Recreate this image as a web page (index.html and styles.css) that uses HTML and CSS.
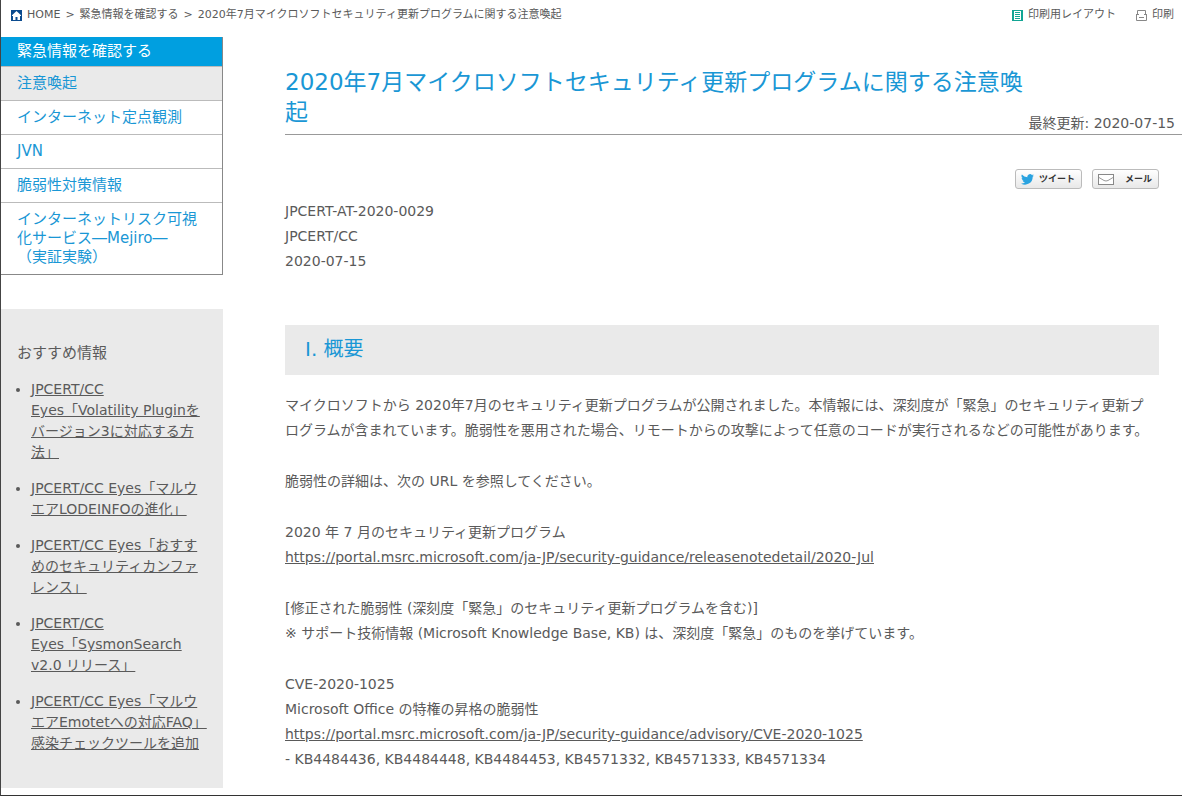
FILE: index.html
```html
<!DOCTYPE html>
<html lang="ja">
<head>
<meta charset="utf-8">
<title>2020年7月マイクロソフトセキュリティ更新プログラムに関する注意喚起</title>
<link rel="stylesheet" href="styles.css">
</head>
<body>
<div class="page">
  <header class="topbar">
    <nav class="breadcrumb" aria-label="パンくず">
      <svg class="icon-home" viewBox="0 0 11 11" aria-hidden="true"><rect width="11" height="11" fill="#0b4b8f"/><path d="M5.5 1 10 5.2V6H9v4H6.500V7h-2v3H2V6H1v-.8z" fill="#fff"/></svg>
      <a href="#">HOME</a><span>&gt;</span><a href="#">緊急情報を確認する</a><span>&gt;</span><span>2020年7月マイクロソフトセキュリティ更新プログラムに関する注意喚起</span>
    </nav>
    <div class="tools">
      <a href="#"><svg class="icon-tool" viewBox="0 0 11 11" aria-hidden="true"><rect width="11" height="11" fill="#12a594"/><path d="M2 1h7v9H2z" fill="#fff"/><path d="M3 2.500h5M3 4.500h5M3 6.500h5M3 8.500h5" stroke="#12a594"/></svg>印刷用レイアウト</a>
      <a href="#"><svg class="icon-tool" viewBox="0 0 11 11" aria-hidden="true"><path d="M1.500 4V.500h8V4M.500 4.500v6h10v-6M0 4.500h3M8 4.500h3M3 7.500h5" fill="none" stroke="#888"/></svg>印刷</a>
    </div>
  </header>
  <div class="columns">
    <aside class="side">
      <nav class="menu">
        <h2>緊急情報を確認する</h2>
        <ul>
          <li class="current"><a href="#">注意喚起</a></li>
          <li><a href="#">インターネット定点観測</a></li>
          <li><a href="#">JVN</a></li>
          <li><a href="#">脆弱性対策情報</a></li>
          <li><a href="#">インターネットリスク可視化サービス―Mejiro―<br>（実証実験）</a></li>
        </ul>
      </nav>
      <section class="recommend">
        <h2>おすすめ情報</h2>
        <ul>
          <li><a href="#">JPCERT/CC<br>Eyes「Volatility Pluginを<br>バージョン3に対応する方<br>法」</a></li>
          <li><a href="#">JPCERT/CC Eyes「マルウ<br>エアLODEINFOの進化」</a></li>
          <li><a href="#">JPCERT/CC Eyes「おすす<br>めのセキュリティカンファ<br>レンス」</a></li>
          <li><a href="#">JPCERT/CC<br>Eyes「SysmonSearch<br>v2.0 リリース」</a></li>
          <li><a href="#">JPCERT/CC Eyes「マルウ<br>エアEmotetへの対応FAQ」<br>感染チェックツールを追加</a></li>
        </ul>
      </section>
    </aside>
    <main class="main">
      <div class="title">
        <h1>2020年7月マイクロソフトセキュリティ更新プログラムに関する注意喚起</h1>
        <p class="updated">最終更新: 2020-07-15</p>
      </div>
      <div class="body">
        <div class="share">
          <button type="button"><svg class="icon-bird" viewBox="0 0 24 20" aria-hidden="true"><path d="M24 2.400a10 10 0 0 1-2.800.8A5 5 0 0 0 23.300.400a10 10 0 0 1-3.100 1.200A4.900 4.900 0 0 0 11.800 6 14 14 0 0 1 1.700.900a4.900 4.900 0 0 0 1.500 6.600A5 5 0 0 1 1 6.900a4.900 4.900 0 0 0 3.900 4.800 5 5 0 0 1-2.200.1 4.900 4.900 0 0 0 4.600 3.400A9.900 9.900 0 0 1 0 17.300a14 14 0 0 0 21.500-12.400A10 10 0 0 0 24 2.400z" fill="#2aa3e0"/></svg>ツイート</button>
          <button type="button"><svg class="icon-mail" viewBox="0 0 16 11" aria-hidden="true"><rect x=".5" y=".5" width="15" height="10" fill="#fff" stroke="#888"/><path d="M1 3.500l5 3q2 1 4 0l5-3" fill="none" stroke="#999"/></svg>メール</button>
        </div>
        <p class="meta">JPCERT-AT-2020-0029<br>JPCERT/CC<br>2020-07-15</p>
        <h2 class="section">I. 概要</h2>
        <p>マイクロソフトから 2020年7月のセキュリティ更新プログラムが公開されました。本情報には、深刻度が「緊急」のセキュリティ更新プ<br>ログラムが含まれています。脆弱性を悪用された場合、リモートからの攻撃によって任意のコードが実行されるなどの可能性があります。</p>
        <p>脆弱性の詳細は、次の URL を参照してください。</p>
        <p>2020 年 7 月のセキュリティ更新プログラム<br><a href="#">https://portal.msrc.microsoft.com/ja-JP/security-guidance/releasenotedetail/2020-Jul</a></p>
        <p>[修正された脆弱性 (深刻度「緊急」のセキュリティ更新プログラムを含む)]<br>※ サポート技術情報 (Microsoft Knowledge Base, KB) は、深刻度「緊急」のものを挙げています。</p>
        <p>CVE-2020-1025<br>Microsoft Office の特権の昇格の脆弱性<br><a href="#">https://portal.msrc.microsoft.com/ja-JP/security-guidance/advisory/CVE-2020-1025</a><br>- KB4484436, KB4484448, KB4484453, KB4571332, KB4571333, KB4571334</p>
      </div>
    </main>
  </div>
</div>
</body>
</html>
```

FILE: styles.css
```css
* { box-sizing: border-box; }
body {
  margin: 0;
  background: #fff;
  color: #5a5a5a;
  font: 14px/25px "DejaVu Sans", "Noto Sans CJK JP", sans-serif;
}
h1, h2, p, ul { margin: 0; padding: 0; font-weight: 400; }
ul { list-style: none; }
a { color: inherit; }

.page {
  min-height: 100vh;
  border-left: 1px solid #444;
  border-bottom: 1px solid #333;
}
.topbar {
  display: flex;
  justify-content: space-between;
  height: 37px;
  padding: 6px 8px 0 10px;
  font-size: 11px;
  line-height: 18px;
}
.topbar a { text-decoration: none; }
.breadcrumb { display: flex; gap: 5px; }
.icon-home, .icon-tool { width: 11px; height: 11px; margin-top: 4px; }
.tools { display: flex; gap: 20px; }
.tools a { display: flex; gap: 5px; }

.columns { display: flex; gap: 62px; }
.side { flex: 0 0 222px; }
.menu {
  border: solid #888;
  border-width: 0 1px 1px 0;
  font-size: 15px;
  line-height: 19px;
  color: #1a97d5;
}
.menu h2 {
  padding: 5px 16px;
  background: #009fe0;
  color: #fff;
  font-size: 15px;
  line-height: 19px;
}
.menu li { border-top: 1px solid #bbb; padding: 7px 16px; }
.menu a { text-decoration: none; }
.menu .current { background: #eaeaea; }

.recommend {
  margin-top: 34px;
  padding: 32px 16px 34px;
  background: #eaeaea;
  line-height: 21px;
}
.recommend h2 { margin-bottom: 13px; font-size: 15px; line-height: 25px; }
.recommend ul { padding-left: 14px; list-style: disc; white-space: nowrap; }
.recommend li { margin-bottom: 15px; }
.recommend li:last-child { margin-bottom: 0; }

.main { flex: 1; min-width: 0; }
.title {
  display: flex;
  flex-wrap: wrap;
  align-items: flex-end;
  justify-content: space-between;
  padding: 30px 7px 0 0;
  border-bottom: 1px solid #999;
}
.title h1 {
  flex: 0 1 741px;
  padding-bottom: 7px;
  color: #1a97d5;
  font-size: 23px;
  line-height: 30px;
}
.updated { white-space: nowrap; line-height: 22px; }
.body { padding: 34px 23px 22px 0; }
.body p { margin-bottom: 26px; }
.body p:last-child { margin-bottom: 0; }
.share { display: flex; justify-content: flex-end; gap: 10px; margin-bottom: 10px; }
.share button {
  display: flex;
  align-items: center;
  justify-content: space-between;
  width: 67px;
  height: 20px;
  padding: 0 6px 0 5px;
  border: 1px solid #bbb;
  border-radius: 3px;
  background: linear-gradient(#fff, #e8e8e8);
  color: #333;
  font: 700 9px/18px "Noto Sans CJK JP", sans-serif;
}
.icon-bird { width: 13px; height: 11px; }
.icon-mail { width: 16px; height: 11px; }
.body .meta { margin-bottom: 51px; }
.section {
  margin-bottom: 18px;
  padding: 12px 20px 13px;
  background: #eaeaea;
  color: #1a97d5;
  font-size: 20px;
  line-height: 25px;
}
```
